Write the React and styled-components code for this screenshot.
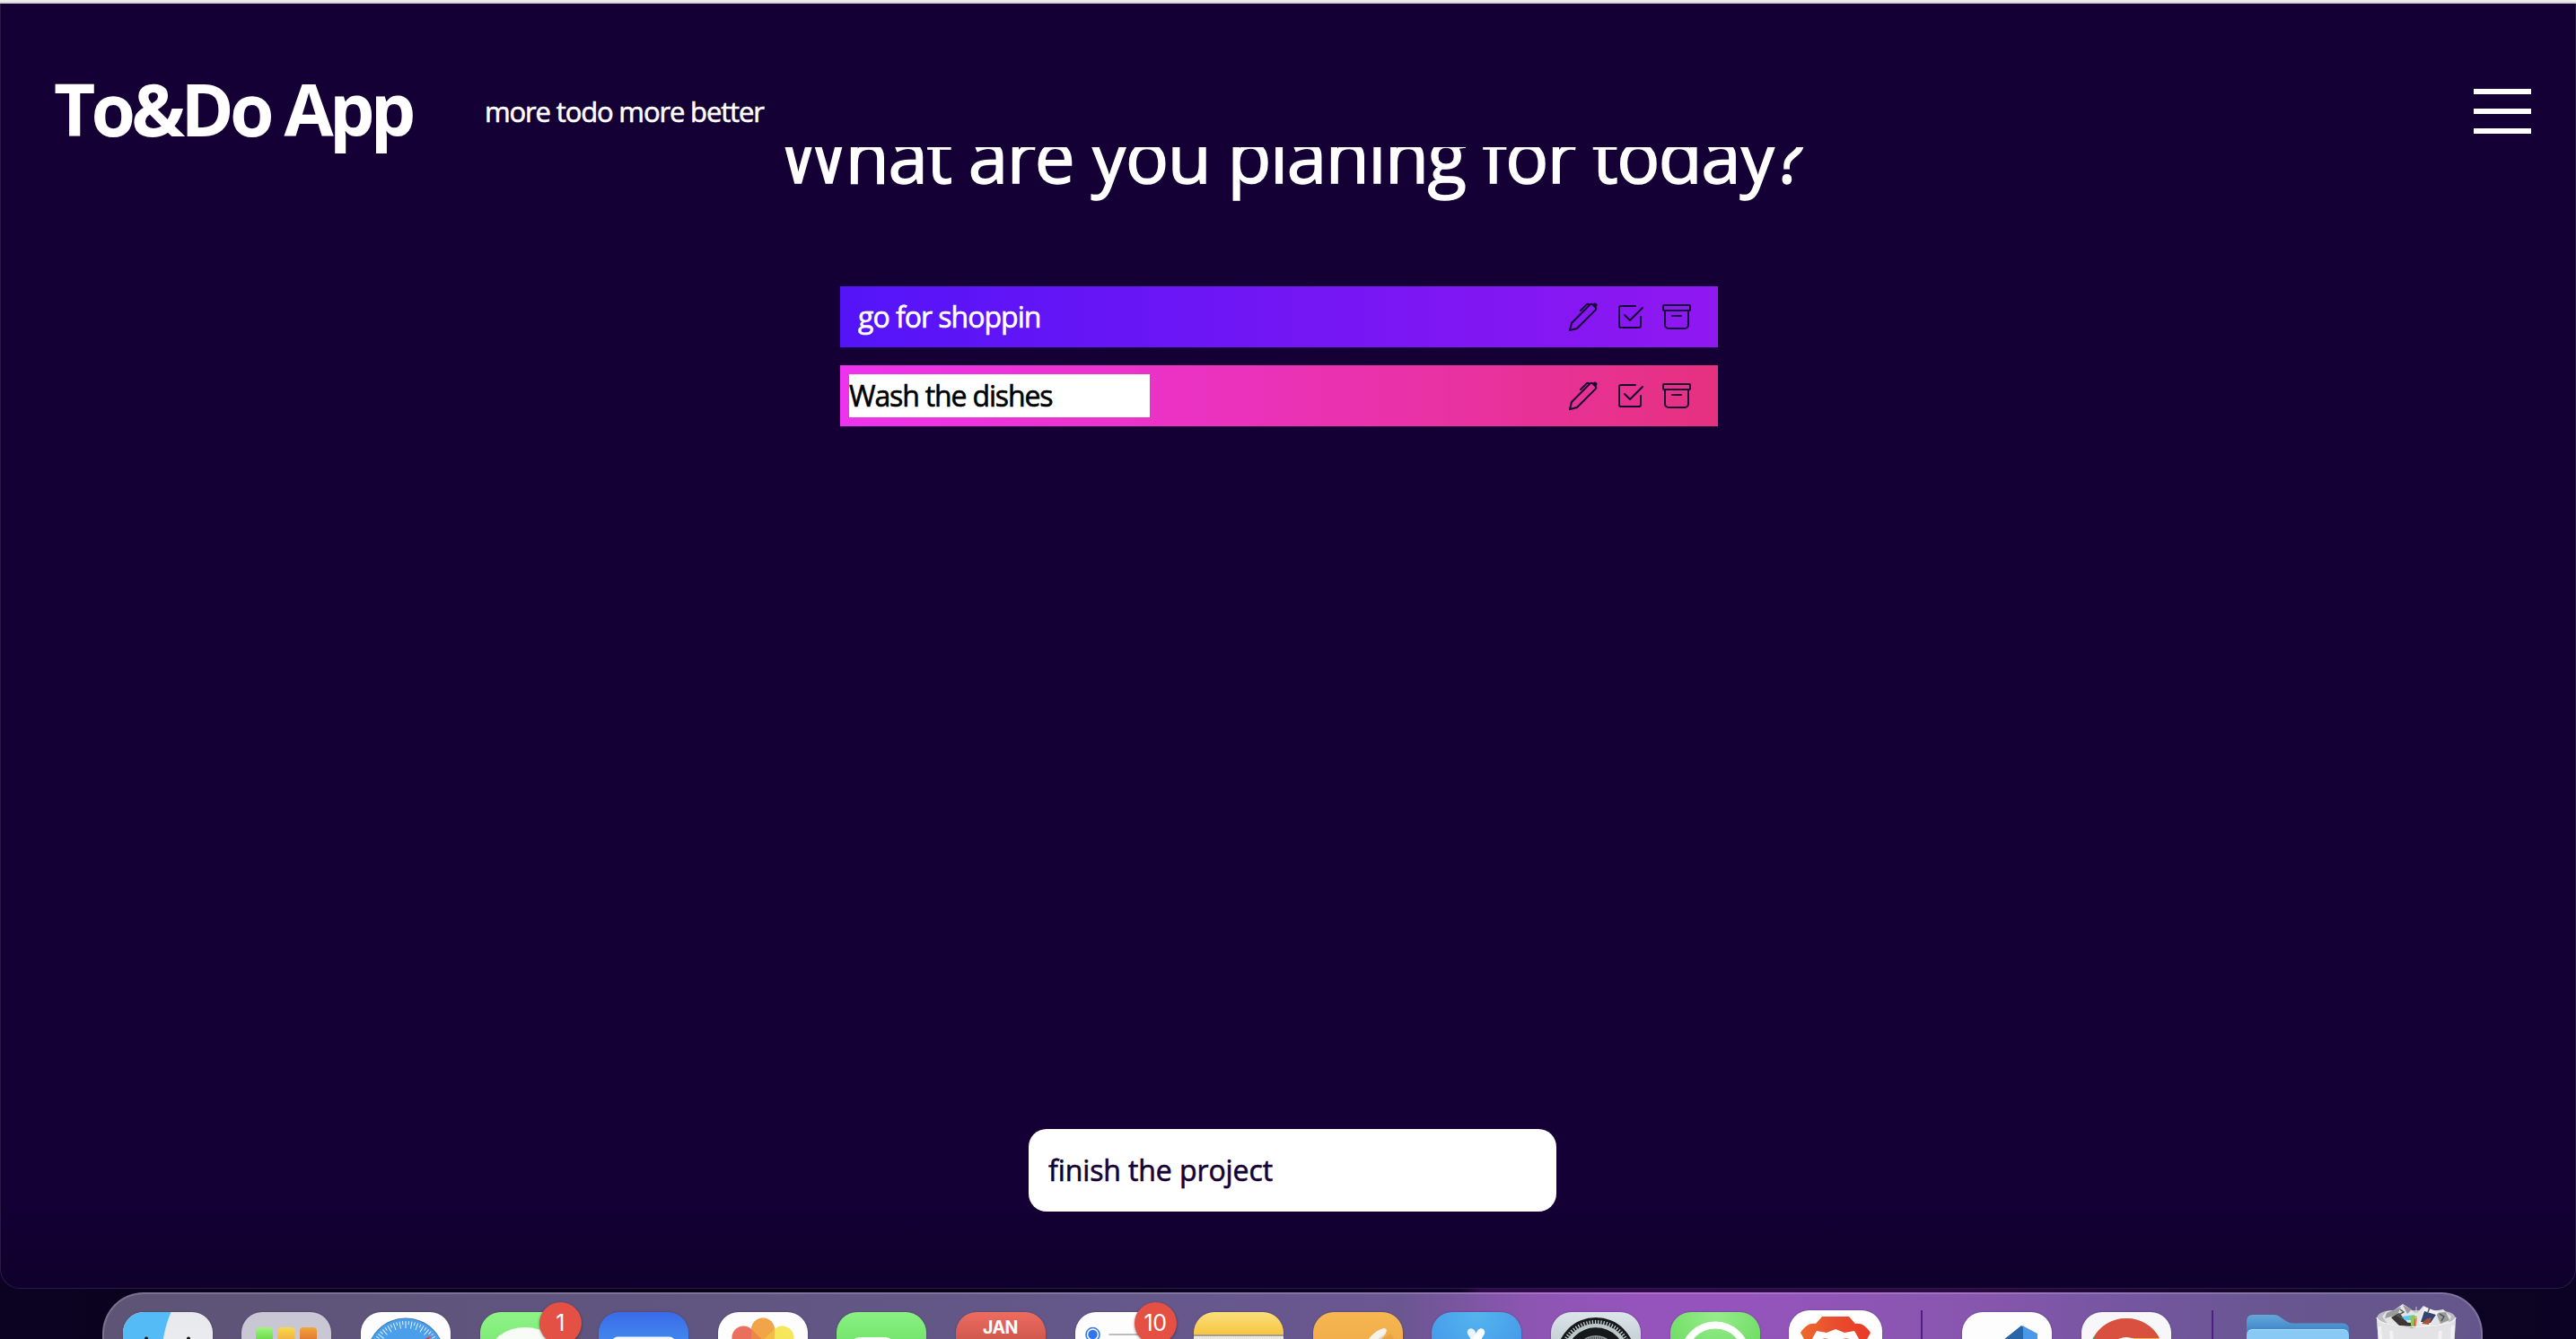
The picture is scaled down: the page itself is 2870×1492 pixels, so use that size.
import React from "react";
import styled, { createGlobalStyle } from "styled-components";
import { BsPen, BsCheck2Square, BsArchive } from "react-icons/bs";

const GlobalStyle = createGlobalStyle`
  * { box-sizing: border-box; }
  html, body { margin: 0; padding: 0; }
  body {
    background: #09031b;
    font-family: "Open Sans", "Noto Sans", sans-serif;
    overflow: hidden;
  }
`;

const Desktop = styled.div`
  position: relative;
  width: 2870px;
  height: 1492px;
  overflow: hidden;
  background: linear-gradient(90deg, #0c0322 0, #07021a 300px, #080218 1100px, #0e0228 1625px, #2f0a48 1650px, #2c0943 2150px, #1b0631 2400px, #0b0420 2620px, #0c0324 100%);
`;

const BrowserEdge = styled.div`
  height: 4px;
  background: #efeff0;
  border-bottom: 2px solid #d5d6d8;
`;

const Page = styled.div`
  display: flex;
  flex-direction: column;
  align-items: center;
  height: 1432px;
  color: #fff;
  background: linear-gradient(180deg, #140034 0, #140034 1340px, #0f002c 100%);
  border: 1px solid #2a1a48;
  border-top: 0;
  border-radius: 0 0 22px 22px;
`;

const Header = styled.header`
  position: relative;
  z-index: 1;
  display: flex;
  align-items: center;
  align-self: stretch;
  height: 160px;
  padding: 80px 49px 0 59px;
  background: #140034;
`;

const Brand = styled.h1`
  width: 480px;
  margin: -6px 0 0;
  font-size: 80px;
  line-height: 80px;
  font-weight: 700;
  letter-spacing: -4.8px;
  white-space: nowrap;
`;

const Slogan = styled.p`
  flex: 1;
  margin: 0;
  font-size: 31px;
  line-height: 40px;
  letter-spacing: -1.15px;
  -webkit-text-stroke: 0.6px currentColor;
`;

const Burger = styled.button`
  display: flex;
  flex-direction: column;
  gap: 16px;
  padding: 0;
  border: 0;
  background: none;
`;

const BurgerLine = styled.span`
  width: 64px;
  height: 6px;
  background: #fff;
`;

const Title = styled.h2`
  width: 1140px;
  margin: -41px 0 0 9px;
  font-size: 80px;
  line-height: 100px;
  font-weight: 400;
  letter-spacing: -1.5px;
  -webkit-text-stroke: 1.4px currentColor;
  white-space: nowrap;
`;

const TodoList = styled.ul`
  display: flex;
  flex-direction: column;
  gap: 20px;
  width: 978px;
  margin: 96px 0 0;
  padding: 0;
  transform: translateX(-10px);
  list-style: none;
`;

const TodoRow = styled.li`
  display: flex;
  align-items: center;
  height: 68px;
  padding: 10px 30px 10px ${(p) => (p.$editing ? 10 : 20)}px;
  background: linear-gradient(90deg, ${(p) => p.$from}, ${(p) => p.$to});
`;

const TodoText = styled.span`
  flex: 1;
  font-size: 32px;
  line-height: 48px;
  letter-spacing: -1px;
  -webkit-text-stroke: 0.6px currentColor;
`;

const EditField = styled.input`
  width: 335px;
  height: 48px;
  margin-right: auto;
  padding: 0;
  border: 0;
  outline: 0;
  background: #fff;
  color: #000;
  font: 400 32px/48px "Open Sans", "Noto Sans", sans-serif;
  letter-spacing: -1.15px;
  -webkit-text-stroke: 0.6px currentColor;
`;

const Actions = styled.div`
  display: flex;
  gap: 20px;
  font-size: 32px;
  color: #140034;
  svg { display: block; }
`;

const NewTodo = styled.input`
  width: 588px;
  height: 92px;
  margin: auto 0 85px 10px;
  padding: 0 24px 2px 22px;
  border: 0;
  outline: 0;
  border-radius: 20px;
  background: #fff;
  color: #140034;
  font: 400 32px/40px "Open Sans", "Noto Sans", sans-serif;
  letter-spacing: -0.1px;
  -webkit-text-stroke: 0.6px currentColor;
`;

const Dock = styled.nav`
  position: absolute;
  left: 114px;
  top: 1440px;
  display: flex;
  align-items: flex-start;
  width: 2652px;
  height: 120px;
  padding: 20px 0 0 20.8px;
  border: 2px solid rgba(255, 255, 255, 0.18);
  border-radius: 46px;
  background: linear-gradient(90deg, #5e5475 0, #605580 600px, #65588b 1180px, #6b5692 1450px, #8d55b2 1590px, #9454bb 1700px, #9454bb 1840px, #8656ad 2100px, #7456a0 2260px, #67568f 2440px, #64568a 100%) border-box;
`;

const DockSlot = styled.div`
  position: relative;
  flex: none;
  width: ${(p) => p.$width || 100}px;
  margin: ${(p) => p.$top || 0}px ${(p) => (p.$gap === undefined ? 32.6 : p.$gap)}px 0 0;
  svg { display: block; overflow: visible; }
`;

const AppTile = styled.div`
  height: ${(p) => p.$height || 100}px;
  overflow: hidden;
  border-radius: 23px;
  background: ${(p) => p.$fill};
  box-shadow: 0 0 2px rgba(20, 0, 40, 0.35);
`;

const Divider = styled.div`
  width: 2px;
  height: 80px;
  margin: -2px ${(p) => p.$gap}px 0 0;
  background: #4d2086;
`;

const Badge = styled.span`
  position: absolute;
  left: 66px;
  top: -11px;
  width: 47px;
  height: 47px;
  border-radius: 50%;
  background: #e45043;
  box-shadow: 0 1px 3px rgba(0, 0, 0, 0.45);
  color: #fff;
  font: 400 25px/47px Inter, sans-serif;
  letter-spacing: -0.5px;
  text-align: center;
`;

const Art = ({ children }) => (
  <svg width="100" height="100" viewBox="0 0 100 100">{children}</svg>
);

const range = (n) => Array.from({ length: n }, (_, i) => i);

const FinderArt = () => (
  <Art>
    <path d="M0 0H54C49 12 47 20 45 32V100H0Z" fill="#55bbf7" />
    <path d="M54 0C49 12 47 20 45 32V100" fill="none" stroke="#d7e9f4" strokeWidth="1" />
    <rect x="24" y="27.5" width="4" height="12" rx="2" fill="#111" />
    <rect x="71" y="27.5" width="4" height="12" rx="2" fill="#111" />
  </Art>
);

const LaunchpadArt = () => (
  <Art>
    <defs>
      <linearGradient id="lpG" x2="0" y2="1"><stop stopColor="#9ff77c" /><stop offset="1" stopColor="#56cf38" /></linearGradient>
      <linearGradient id="lpY" x2="0" y2="1"><stop stopColor="#f8d84c" /><stop offset="1" stopColor="#efa43c" /></linearGradient>
      <linearGradient id="lpO" x2="0" y2="1"><stop stopColor="#f0a63a" /><stop offset="1" stopColor="#dd6532" /></linearGradient>
    </defs>
    <rect x="16" y="17" width="19" height="19" rx="4" fill="url(#lpG)" />
    <rect x="40.5" y="17" width="19" height="19" rx="4" fill="url(#lpY)" />
    <rect x="65" y="17" width="19" height="19" rx="4" fill="url(#lpO)" />
  </Art>
);

const SafariArt = () => (
  <Art>
    <circle cx="50" cy="50" r="43.5" fill="#3f7fb8" />
    <circle cx="50" cy="50" r="42.5" fill="#4a9eea" />
    {range(72).map((i) => (
      <path key={i} d={`M50 ${10} V${i % 2 ? 14 : 18}`} stroke="#e6f3fd" strokeWidth="1" transform={`rotate(${i * 5} 50 50)`} />
    ))}
    <path d="M80 25L46 45L55 55Z" fill="#e23b32" />
  </Art>
);

const PhotosArt = () => {
  const petals = ["#f0a13f", "#f5e34a", "#b6d35a", "#6fbf8b", "#6fa9d8", "#9a86c9", "#c9739d", "#e8604c"];
  return (
    <Art>
      {petals.map((c, i) => (
        <rect key={c} x="37" y="6.5" width="26" height="41" rx="13" fill={c} fillOpacity="0.9" transform={`rotate(${i * 45} 50 50)`} />
      ))}
      <rect x="37" y="6.5" width="26" height="41" rx="13" fill="#f0a13f" fillOpacity="0.55" />
    </Art>
  );
};

const CalendarArt = () => (
  <Art>
    <rect y="34" width="100" height="66" fill="#fff" />
    <text x="49.5" y="24" textAnchor="middle" fontFamily="Inter, sans-serif" fontSize="19.5" fontWeight="700" letterSpacing="-0.5" fill="#fff">JAN</text>
  </Art>
);

const RemindersArt = () => (
  <Art>
    <circle cx="19.5" cy="25" r="7.5" fill="none" stroke="#3c78d8" strokeWidth="1.6" />
    <circle cx="19.5" cy="25" r="5.2" fill="#2f74f0" />
    <rect x="37.5" y="24" width="52" height="2" fill="#bdbdbf" />
  </Art>
);

const NotesArt = () => (
  <Art>
    <rect y="25" width="100" height="75" fill="#efede6" />
    <rect y="25" width="100" height="2" fill="#a19d92" />
    <path d="M1 29H100" stroke="#c9c6bd" strokeWidth="1" strokeDasharray="1 1.5" />
  </Art>
);

const PagesArt = () => (
  <Art>
    <path d="M60 38L87 24L96 42L70 46Z" fill="#dd9a3a" opacity="0.5" />
    <path d="M55 40C62 27 72 19 79 18C83 18 82 22 80 25L66 42Z" fill="#f5f2ea" />
    <path d="M60 40L80 24L66 42Z" fill="#d8d0c2" />
  </Art>
);

const AppStoreArt = () => (
  <Art>
    <path d="M44 22.5L66 60" stroke="#e9f3fb" strokeWidth="8.5" strokeLinecap="round" />
    <path d="M55 22.5L33 60" stroke="#fff" strokeWidth="8.5" strokeLinecap="round" />
  </Art>
);

const SettingsArt = () => (
  <Art>
    <circle cx="50" cy="50" r="44" fill="#16191b" />
    <circle cx="50" cy="50" r="39" fill="none" stroke="#c3cdd0" strokeWidth="4" strokeDasharray="1.3 1.9" />
    <circle cx="50" cy="50" r="35" fill="none" stroke="#bcc7ca" strokeWidth="4.5" />
    <path d="M40 19C56 15 71 22 78 34L46 32C39 30 36 22 40 19Z" fill="#16191b" />
    <path d="M30 25L39 38L20 44C20 36 24 28 30 25Z" fill="#16191b" />
    <circle cx="50" cy="50" r="24" fill="#8c9496" />
    <circle cx="50" cy="50" r="21" fill="none" stroke="#3a3f41" strokeWidth="3" strokeDasharray="1 1.4" />
  </Art>
);

const BraveArt = () => (
  <svg width="104" height="104" viewBox="0 0 104 104">
    <defs>
      <linearGradient id="brv"><stop stopColor="#ec6a2c" /><stop offset="0.5" stopColor="#ea4c2f" /><stop offset="1" stopColor="#e93a25" /></linearGradient>
    </defs>
    <path d="M37 7H67L74 15C80 14 86 17 91 25L86 34L88 44L76 78L52 98L28 78L16 44L18 34L13 25C18 17 24 14 30 15Z" fill="url(#brv)" />
    <path d="M31 23L42 25L52 21L62 25L73 23L80 35L70 56L52 72L34 56L24 35Z" fill="#fff" />
    <path d="M35 33C39 30 44 31 48 34V42H35ZM56 34C60 31 65 30 69 33V42H56Z" fill="#ee7a63" />
  </svg>
);

const CodeArt = () => (
  <Art>
    <path d="M66 15L70 17V84L62 84L20 50L46 31Z" fill="#2866a8" />
    <path d="M68 15.5L84 24V76L68 84Z" fill="#4a98e9" />
  </Art>
);

const ChromeArt = () => (
  <Art>
    <circle cx="50" cy="48" r="41" fill="#f4bf3a" />
    <path d="M50 7A41 41 0 0 1 87 29H50L34 58L13 29A41 41 0 0 1 50 7Z" fill="#d95040" />
    <path d="M14 27L34 60L50 89A41 41 0 0 1 14 27Z" fill="#46a556" />
    <circle cx="50" cy="48" r="20" fill="#fff" />
  </Art>
);

const FolderArt = () => (
  <svg width="114" height="80" viewBox="0 0 114 80">
    <defs>
      <linearGradient id="fold" x2="0" y2="24" gradientUnits="userSpaceOnUse"><stop stopColor="#63a7da" /><stop offset="1" stopColor="#337bc4" /></linearGradient>
    </defs>
    <path d="M0 8Q0 0 7 0H31Q35 0 38 3L44 7Q48 9.500 52 9.500H107Q114 9.500 114 17V80H0Z" fill="url(#fold)" />
    <path d="M0 23Q0 16 7 16H107Q114 16 114 23V80H0Z" fill="#89c9f5" />
    <path d="M2 18.500Q4 16.500 7 16.500H107Q110 16.500 112 18.500" fill="none" stroke="#a8daf9" />
  </svg>
);

const TrashArt = () => (
  <svg width="90" height="100" viewBox="0 0 90 100">
    <path d="M1 17Q1 8 18 7H72Q89 9 89 17L84 100H7Z" fill="#bdbbc3" />
    <path d="M7 14L12 8L20 7L30 0L38 5L45 11L53 2L64 8L75 6L84 14L80 22L45 27L13 22Z" fill="#e4e4e6" />
    <path d="M12 10L28 3L24 12L10 16ZM30 1L40 6L35 11ZM67 10L78 9L82 18L72 22Z" fill="#999b9d" />
    <path d="M17 15L26 10L40 26L26 24ZM22 20L40 21L42 28L32 25Z" fill="#3d3635" />
    <path d="M29 14L43 12L40 18L32 18Z" fill="#5bcaf0" />
    <path d="M39 13L46 13L44 27L39 24Z" fill="#8dc65b" />
    <path d="M43 17L46 15L45 27L42 26Z" fill="#c76135" />
    <path d="M54 3L48 22L60 25L70 9Z" fill="#f3f3f4" />
    <path d="M54 8L67 12L61 21L50 20Z" fill="#34446e" />
    <path d="M56 17L62 15L59 23L51 22Z" fill="#a95235" />
    <path d="M27 6L31 9L24 13L30 16M71 11L76 14L73 19M60 4L58 9" stroke="#56585a" fill="none" strokeWidth="1.5" />
    <path d="M1 16C8 30 82 30 89 16L84 100H7Z" fill="#e3e3e6" />
    <path d="M4 25L9 90M17 30L22 90M72 30L68 90M86 24L80 90" stroke="#fafafa" strokeWidth="4" opacity="0.65" />
    <path d="M1 15C3 29 87 29 89 15" fill="none" stroke="#f3f3f5" strokeWidth="1.5" />
    <path d="M45 3V27" stroke="#f5f5f5" strokeWidth="1" opacity="0.7" />
  </svg>
);

const APPS = [
  { id: "finder", fill: "linear-gradient(#e8e9ed, #f0f0f2)", art: <FinderArt /> },
  { id: "launchpad", fill: "#c9c7d3", art: <LaunchpadArt /> },
  { id: "safari", fill: "#fdfdfe", art: <SafariArt /> },
  {
    id: "messages",
    fill: "linear-gradient(#8ef486, #5fd857)",
    badge: "1",
    art: <Art><ellipse cx="50" cy="48" rx="40" ry="31" fill="#f7fdf6" /></Art>,
  },
  {
    id: "mail",
    fill: "linear-gradient(#396be8, #4aa0f4 60%)",
    art: <Art><rect x="15" y="27.500" width="70" height="48" rx="6" fill="#f7f9fd" /></Art>,
  },
  { id: "photos", fill: "#fdfdfd", art: <PhotosArt /> },
  {
    id: "facetime",
    fill: "linear-gradient(#8af283, #62d95b 60%)",
    art: <Art><rect x="15" y="28" width="50" height="44" rx="11" fill="#f5fcf4" /></Art>,
  },
  { id: "calendar", fill: "linear-gradient(#ee6c60, #cd564b 34%)", art: <CalendarArt /> },
  { id: "reminders", fill: "#fdfdfe", badge: "10", art: <RemindersArt /> },
  { id: "notes", fill: "linear-gradient(#fae07c, #f7c540 25%)", art: <NotesArt /> },
  { id: "pages", fill: "linear-gradient(#f6b750, #eda545 60%)", art: <PagesArt /> },
  { id: "appstore", fill: "radial-gradient(circle at 50% 0, #54b5ee, #4598ea 60%)", art: <AppStoreArt /> },
  { id: "settings", fill: "linear-gradient(#dbe5ea, #bcc5c8 50%)", art: <SettingsArt /> },
  {
    id: "whatsapp",
    fill: "radial-gradient(circle at 50% 0, #98ec8c, #6bdc61 60%)",
    art: <Art><circle cx="50" cy="49.500" r="35" fill="none" stroke="#fff" strokeWidth="8" /></Art>,
  },
];

const TODOS = [
  { text: "go for shoppin", from: "#5414f8", to: "#9018f1" },
  { text: "Wash the dishes", from: "#ee33ee", to: "#e63180", editing: true },
];

const TodoItem = ({ todo }) => (
  <TodoRow $from={todo.from} $to={todo.to} $editing={todo.editing}>
    {todo.editing ? <EditField defaultValue={todo.text} /> : <TodoText>{todo.text}</TodoText>}
    <Actions>
      <BsPen />
      <BsCheck2Square />
      <BsArchive />
    </Actions>
  </TodoRow>
);

export default function App() {
  return (
    <Desktop>
      <GlobalStyle />
      <BrowserEdge />
      <Page>
        <Header>
          <Brand>To&amp;Do App</Brand>
          <Slogan>more todo more better</Slogan>
          <Burger>
            <BurgerLine />
            <BurgerLine />
            <BurgerLine />
          </Burger>
        </Header>
        <Title>What are you planing for today?</Title>
        <TodoList>
          {TODOS.map((todo) => (
            <TodoItem key={todo.text} todo={todo} />
          ))}
        </TodoList>
        <NewTodo defaultValue="finish the project" />
      </Page>
      <Dock>
        {APPS.map((app) => (
          <DockSlot key={app.id}>
            <AppTile $fill={app.fill}>{app.art}</AppTile>
            {app.badge && <Badge>{app.badge}</Badge>}
          </DockSlot>
        ))}
        <DockSlot $width={104} $gap={43} $top={-2}>
          <AppTile $fill="#fff" $height={104}><BraveArt /></AppTile>
        </DockSlot>
        <Divider $gap={44} />
        <DockSlot>
          <AppTile $fill="#fdfdfe"><CodeArt /></AppTile>
        </DockSlot>
        <DockSlot $gap={45}>
          <AppTile $fill="#f7f7fa"><ChromeArt /></AppTile>
        </DockSlot>
        <Divider $gap={37} />
        <DockSlot $width={114} $gap={30} $top={3}>
          <FolderArt />
        </DockSlot>
        <DockSlot $width={90} $gap={0} $top={-9}>
          <TrashArt />
        </DockSlot>
      </Dock>
    </Desktop>
  );
}
